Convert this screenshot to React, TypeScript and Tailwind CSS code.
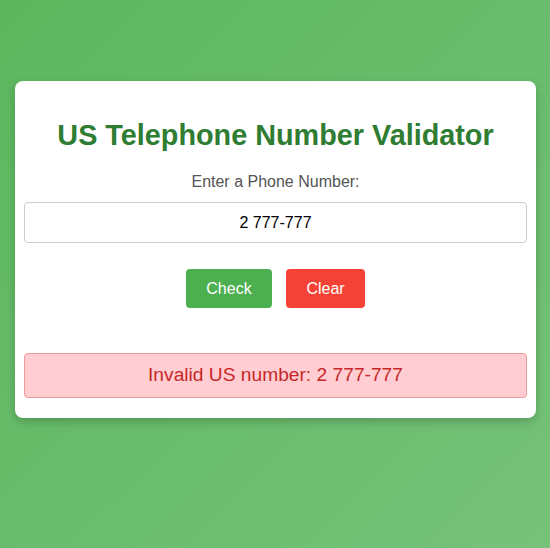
export default function App() {
  return (
    <div
      className="w-[550px] h-[548px] bg-[linear-gradient(135deg,#5bb75e,#76c279)] pt-[81px] pl-[15px]"
      style={{ fontFamily: '"Liberation Sans", Arial, sans-serif' }}
    >
      <div className="w-[521px] bg-white rounded-lg shadow-[0_4px_10px_rgba(0,0,0,0.2)] px-[9px] pt-[38px] pb-[20px]">
        <h1 className="text-center text-[28.8px] leading-[32px] font-bold text-[#2e7d32]">
          US Telephone Number Validator
        </h1>
        <p className="mt-[22px] text-center text-[16px] leading-[18px] text-[#555]">Enter a Phone Number:</p>
        <input
          readOnly
          value="2 777-777"
          className="mt-[11px] block w-full h-[41px] border border-[#ccc] rounded text-center text-[16px] text-black outline-none"
        />
        <div className="mt-[26px] flex justify-center gap-[14px]">
          <button className="w-[86px] h-[39px] bg-[#4caf50] text-white text-[16px] rounded">Check</button>
          <button className="w-[79px] h-[39px] bg-[#f44336] text-white text-[16px] rounded">Clear</button>
        </div>
        <div className="mt-[45px] h-[45px] flex items-center justify-center bg-[#ffcdd2] border border-[#ef9a9a] rounded text-[19.2px] text-[#c62828]">
          Invalid US number: 2 777-777
        </div>
      </div>
    </div>
  );
}
